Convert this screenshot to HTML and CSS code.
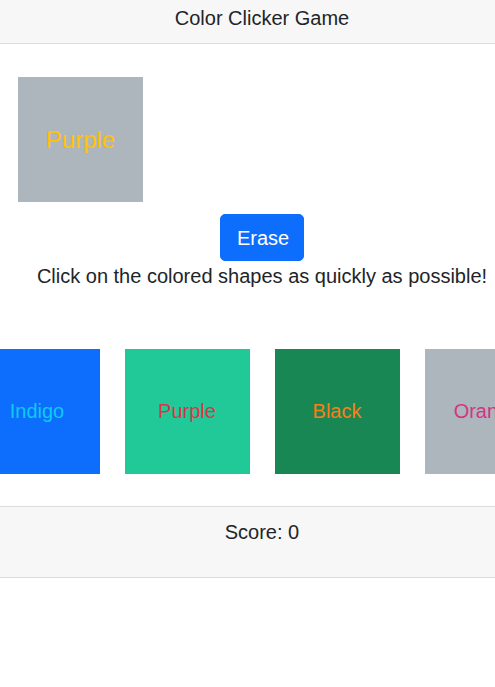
FILE: index.html
```html
<!DOCTYPE html>
<html lang="en">
<head>
<meta charset="utf-8">
<title>Color Clicker Game</title>
<link rel="stylesheet" href="styles.css">
</head>
<body>
<div class="page">
  <header class="topbar">Color Clicker Game</header>
  <main class="game">
    <div class="target-row">
      <div class="shape shape-lg bg-gray"><span class="t-yellow">Purple</span></div>
    </div>
    <button class="btn-erase" type="button">Erase</button>
    <p class="instructions">Click on the colored shapes as quickly as possible!</p>
    <div class="shapes">
      <div class="shape bg-blue"><span class="t-cyan">Indigo</span></div>
      <div class="shape bg-teal"><span class="t-red">Purple</span></div>
      <div class="shape bg-green"><span class="t-orange">Black</span></div>
      <div class="shape bg-gray"><span class="t-pink">Orange</span></div>
    </div>
  </main>
  <footer class="score">Score: 0</footer>
</div>
</body>
</html>
```

FILE: styles.css
```css
html, body {
  margin: 0;
  padding: 0;
  overflow: hidden;
  background: #fff;
}
body {
  font-family: "Liberation Sans", Arial, sans-serif;
  color: #212529;
}
.page {
  width: 524px;
}
.topbar {
  background: #f7f7f7;
  border-bottom: 1px solid #dcdcdc;
  height: 43px;
  box-sizing: content-box;
  text-align: center;
  font-size: 20px;
  line-height: 30px;
  padding-top: 3px;
  box-sizing: border-box;
  height: 44px;
}
.game {
  display: flex;
  flex-direction: column;
  align-items: center;
  padding-top: 33px;
}
.target-row {
  align-self: stretch;
  padding-left: 18px;
  display: flex;
}
.shape {
  width: 125px;
  height: 125px;
  flex: 0 0 125px;
  display: flex;
  align-items: center;
  justify-content: center;
  font-size: 20px;
}
.shape-lg {
  font-size: 24px;
}
.bg-gray { background: #adb5bd; }
.bg-blue { background: #0d6efd; }
.bg-teal { background: #20c997; }
.bg-green { background: #198754; }
.t-yellow { color: #ffc107; }
.t-cyan { color: #0dcaf0; }
.t-red { color: #dc3545; }
.t-orange { color: #fd7e14; }
.t-pink { color: #d63384; }
.btn-erase {
  margin-top: 12px;
  background: #0d6efd;
  color: #fff;
  border: 1px solid #0d6efd;
  border-radius: 5px;
  font-family: inherit;
  font-size: 20px;
  line-height: 30px;
  padding: 7px 16px;
  height: 47px;
  width: 84px;
}
.instructions {
  margin: 0;
  font-size: 20px;
  line-height: 30px;
}
.shapes {
  align-self: stretch;
  display: flex;
  justify-content: center;
  gap: 25px;
  margin-top: 58px;
}
.score {
  margin-top: 32px;
  background: #f7f7f7;
  border-top: 1px solid #dcdcdc;
  border-bottom: 1px solid #dcdcdc;
  text-align: center;
  font-size: 20px;
  line-height: 30px;
  padding: 10px 0 30px;
}
```
